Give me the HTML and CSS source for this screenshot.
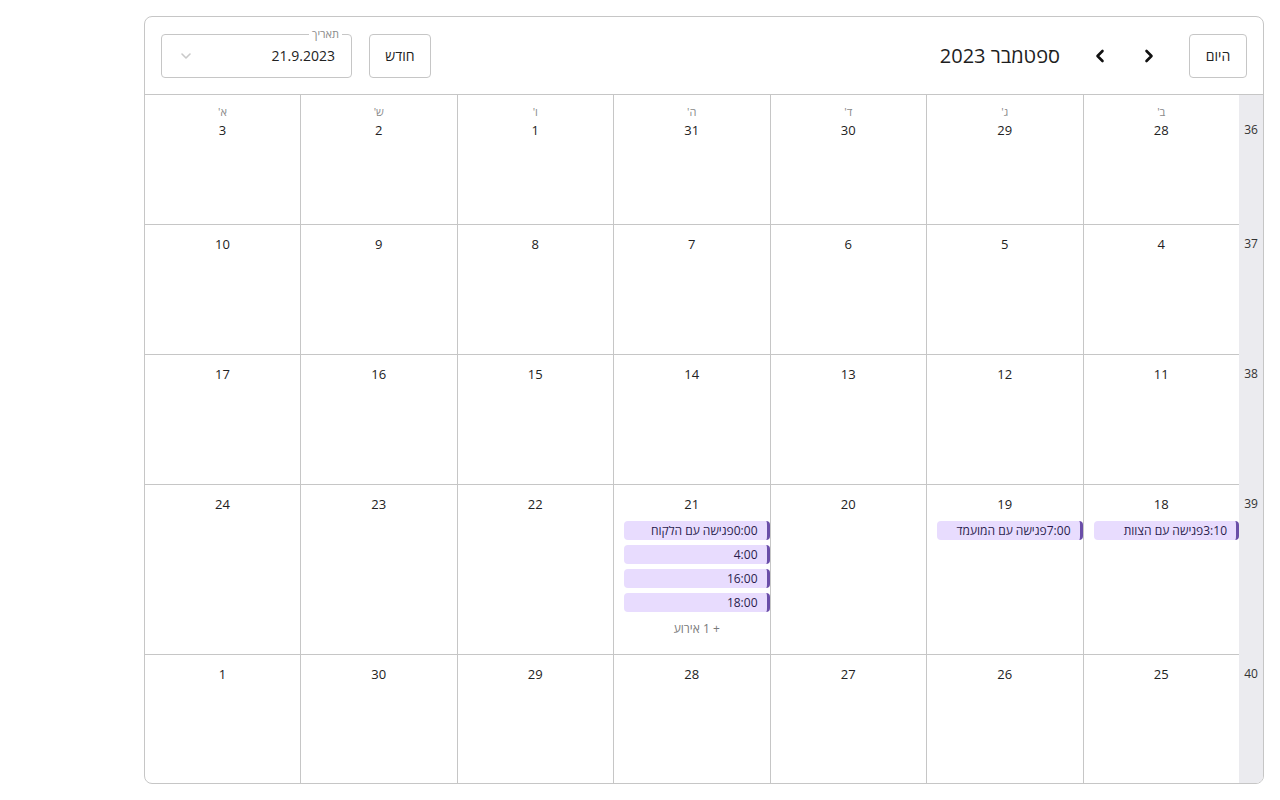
FILE: index.html
```html
<!DOCTYPE html>
<html lang="he">
<head>
<meta charset="utf-8">
<title>לוח שנה</title>
<link rel="stylesheet" href="styles.css">
</head>
<body>
<main class="page">
  <section class="calendar" dir="rtl">
    <header class="cal-header">
      <div class="nav-group">
        <button class="btn btn-today">היום</button>
        <button class="icon-btn btn-next" aria-label="הבא">
          <svg width="12" height="14" viewBox="0 0 12 14"><path d="M3.5 2 L8.5 7 L3.5 12" fill="none" stroke="#111" stroke-width="2.6" stroke-linecap="round" stroke-linejoin="round"/></svg>
        </button>
        <button class="icon-btn btn-prev" aria-label="הקודם">
          <svg width="12" height="14" viewBox="0 0 12 14"><path d="M8.5 2 L3.5 7 L8.5 12" fill="none" stroke="#111" stroke-width="2.6" stroke-linecap="round" stroke-linejoin="round"/></svg>
        </button>
        <h1 class="title">ספטמבר 2023</h1>
      </div>
      <div class="tools-group">
        <button class="btn btn-month">חודש</button>
        <div class="date-field">
          <span class="date-label">תאריך</span>
          <span class="date-value">21.9.2023</span>
          <svg class="date-caret" width="12" height="8" viewBox="0 0 12 8"><path d="M2 2 L6 6 L10 2" fill="none" stroke="#c9c9c9" stroke-width="1.6" stroke-linecap="round" stroke-linejoin="round"/></svg>
        </div>
      </div>
    </header>

    <div class="grid">
      <div class="row">
        <div class="week first">36</div>
        <div class="day"><div class="dow">ב'</div><div class="num">28</div></div>
        <div class="day"><div class="dow">ג'</div><div class="num">29</div></div>
        <div class="day"><div class="dow">ד'</div><div class="num">30</div></div>
        <div class="day"><div class="dow">ה'</div><div class="num">31</div></div>
        <div class="day"><div class="dow">ו'</div><div class="num">1</div></div>
        <div class="day"><div class="dow">ש'</div><div class="num">2</div></div>
        <div class="day last"><div class="dow">א'</div><div class="num">3</div></div>
      </div>
      <div class="row">
        <div class="week">37</div>
        <div class="day"><div class="num">4</div></div>
        <div class="day"><div class="num">5</div></div>
        <div class="day"><div class="num">6</div></div>
        <div class="day"><div class="num">7</div></div>
        <div class="day"><div class="num">8</div></div>
        <div class="day"><div class="num">9</div></div>
        <div class="day last"><div class="num">10</div></div>
      </div>
      <div class="row">
        <div class="week">38</div>
        <div class="day"><div class="num">11</div></div>
        <div class="day"><div class="num">12</div></div>
        <div class="day"><div class="num">13</div></div>
        <div class="day"><div class="num">14</div></div>
        <div class="day"><div class="num">15</div></div>
        <div class="day"><div class="num">16</div></div>
        <div class="day last"><div class="num">17</div></div>
      </div>
      <div class="row">
        <div class="week">39</div>
        <div class="day"><div class="num">18</div>
          <div class="event"><span class="ev-time">3:10</span><span class="ev-title">פגישה עם הצוות</span></div>
        </div>
        <div class="day"><div class="num">19</div>
          <div class="event"><span class="ev-time">7:00</span><span class="ev-title">פגישה עם המועמד</span></div>
        </div>
        <div class="day"><div class="num">20</div></div>
        <div class="day"><div class="num">21</div>
          <div class="event"><span class="ev-time">0:00</span><span class="ev-title">פגישה עם הלקוח</span></div>
          <div class="event"><span class="ev-time">4:00</span></div>
          <div class="event"><span class="ev-time">16:00</span></div>
          <div class="event"><span class="ev-time">18:00</span></div>
          <div class="more">+ 1 אירוע</div>
        </div>
        <div class="day"><div class="num">22</div></div>
        <div class="day"><div class="num">23</div></div>
        <div class="day last"><div class="num">24</div></div>
      </div>
      <div class="row last-row">
        <div class="week">40</div>
        <div class="day"><div class="num">25</div></div>
        <div class="day"><div class="num">26</div></div>
        <div class="day"><div class="num">27</div></div>
        <div class="day"><div class="num">28</div></div>
        <div class="day"><div class="num">29</div></div>
        <div class="day"><div class="num">30</div></div>
        <div class="day last"><div class="num">1</div></div>
      </div>
    </div>
  </section>
</main>
</body>
</html>
```

FILE: styles.css
```css
* { box-sizing: border-box; }

html, body {
  margin: 0;
  background: #ffffff;
}

body {
  font-family: "Open Sans", "DejaVu Sans", sans-serif;
  color: #222;
}

.page {
  padding: 16px 16px 16px 144px;
}

.calendar {
  height: 768px;
  border: 1px solid #c6c6c6;
  border-radius: 8px;
  display: flex;
  flex-direction: column;
  overflow: hidden;
}

.cal-header {
  flex: none;
  height: 78px;
  border-bottom: 1px solid #c6c6c6;
  display: flex;
  align-items: center;
  justify-content: space-between;
  padding: 0 16px;
}

.nav-group,
.tools-group {
  display: flex;
  align-items: center;
}

.btn {
  height: 44px;
  padding: 0 14px;
  border: 1px solid #c6c6c6;
  border-radius: 4px;
  background: #fff;
  font-family: inherit;
  font-size: 14px;
  color: #222;
}

.btn-today { width: 58px; padding: 0; }
.btn-month { width: 62px; padding: 0; }

.icon-btn {
  width: 40px;
  height: 40px;
  border: 0;
  background: transparent;
  padding: 0;
  display: flex;
  align-items: center;
  justify-content: center;
}

.btn-next { margin-right: 20px; }
.btn-prev { margin-right: 9px; }

.title {
  margin: 0 20px 0 0;
  font-size: 20px;
  font-weight: 400;
  color: #1e1e1e;
}

.date-field {
  position: relative;
  width: 191px;
  height: 44px;
  margin-right: 17px;
  border: 1px solid #c6c6c6;
  border-radius: 4px;
  display: flex;
  align-items: center;
  justify-content: space-between;
  padding: 0 16px 0 16px;
}

.date-label {
  position: absolute;
  top: -9px;
  right: 9px;
  padding: 0 3px;
  background: #fff;
  font-size: 11px;
  line-height: 16px;
  color: #8a8a8a;
}

.date-value {
  font-size: 14px;
  color: #222;
}

.date-caret { display: block; margin-left: 2px; }

.grid {
  flex: 1;
  display: flex;
  flex-direction: column;
}

.row {
  flex: 0 0 auto;
  min-height: 130px;
  display: grid;
  grid-template-columns: 24px repeat(6, 156.5px) 1fr;
}

.row.last-row {
  flex: 1 1 auto;
  min-height: 0;
}

.week {
  background: #ebebef;
  font-size: 12px;
  line-height: 20px;
  padding-top: 9px;
  text-align: center;
  color: #333;
}

.week.first { padding-top: 25px; }

.day {
  border-left: 1px solid #c6c6c6;
  border-bottom: 1px solid #c6c6c6;
  padding: 9px 0 17px 0;
  min-width: 0;
}

.day.last { border-left: 0; }
.last-row .day { border-bottom: 0; }

.dow {
  font-size: 11px;
  line-height: 15px;
  color: #8a8a8a;
  text-align: center;
  margin-bottom: 1px;
}

.num {
  font-size: 13px;
  line-height: 20px;
  text-align: center;
  color: #222;
  margin-bottom: 7px;
}

.event {
  height: 19px;
  margin: 0 0 5px 10px;
  background: #e8dcfe;
  border-right: 3px solid #6a4ea8;
  border-radius: 4px;
  padding: 0 9px 0 6px;
  font-size: 12px;
  line-height: 19px;
  color: #2a1d4d;
  white-space: nowrap;
  overflow: hidden;
}

.more {
  margin: 9px 0 0 10px;
  text-align: center;
  font-size: 12px;
  line-height: 16px;
  color: #7a7a7a;
}
```
